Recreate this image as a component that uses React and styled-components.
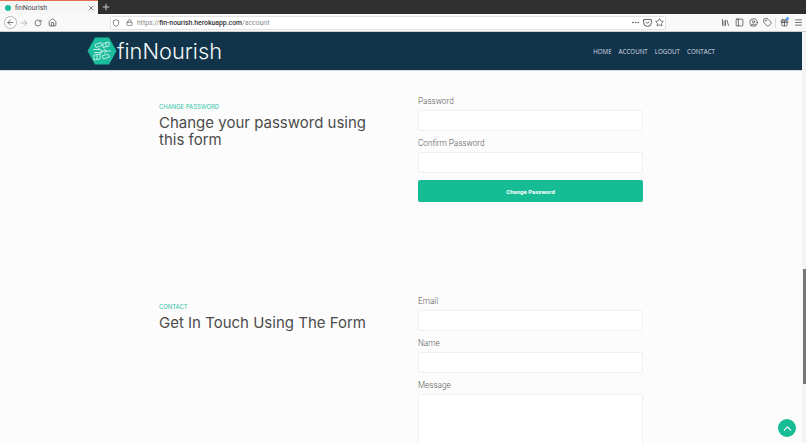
import React from 'react';
import styled, { createGlobalStyle } from 'styled-components';
import {
  ArrowLeft, ArrowRight, RotateCw, Home, Shield, Lock, Star, Library,
  PanelLeft, CircleUser, Tag, Gift, Menu, X, Plus, ChevronUp, Ellipsis,
} from 'lucide-react';

const GlobalStyle = createGlobalStyle`
  html, body {
    margin: 0;
    padding: 0;
    height: 443px;
    overflow: hidden;
    background: #fcfcfc;
  }
  * { box-sizing: border-box; }
`;

const Window = styled.div`
  position: relative;
  width: 806px;
  height: 443px;
  overflow: hidden;
  display: flex;
  flex-direction: column;
  font-family: 'Roboto', sans-serif;
`;

const TabStrip = styled.div`
  height: 14px;
  flex: none;
  background: #302f2f;
  display: flex;
  align-items: center;
`;

const Tab = styled.div`
  width: 98px;
  height: 14px;
  background: #f6f6f7;
  border-top: 1px solid #e2714b;
  display: flex;
  align-items: center;
  padding: 0 3px 0 5px;
  gap: 4px;
  color: #4a4a4f;
  font-size: 7px;
`;

const TabDot = styled.span`
  width: 6px;
  height: 6px;
  border-radius: 50%;
  background: #1abc9c;
  flex: none;
`;

const TabTitle = styled.span`
  flex: 1;
`;

const NewTab = styled.span`
  margin-left: 3px;
  display: flex;
  color: #e4e4e4;
`;

const Toolbar = styled.div`
  height: 18px;
  flex: none;
  background: #f9f9fa;
  border-bottom: 1px solid #ccc;
  display: flex;
  align-items: center;
  color: #4a4a4f;
  padding-left: 4px;
`;

const BackButton = styled.span`
  width: 13px;
  height: 13px;
  border: 1px solid #b4b4b6;
  border-radius: 50%;
  background: #fff;
  display: flex;
  align-items: center;
  justify-content: center;
`;

const ToolIcon = styled.span`
  width: 14px;
  display: flex;
  justify-content: center;
  color: ${p => (p.$muted ? '#b1b1b3' : '#4a4a4f')};
`;

const UrlBar = styled.div`
  width: 556px;
  height: 14px;
  margin-left: 51px;
  background: #fff;
  border: 1px solid #e3e3e5;
  border-radius: 2px;
  display: flex;
  align-items: center;
  font-size: 6.85px;
`;

const UrlLead = styled.span`
  width: 10px;
  margin-right: 3px;
  display: flex;
  justify-content: center;
`;

const UrlText = styled.span`
  flex: 1;
  color: #8a8a8e;
  white-space: nowrap;
`;

const UrlHost = styled.b`
  color: #2f2f33;
  font-weight: 500;
`;

const UrlAction = styled.span`
  width: 12px;
  display: flex;
  justify-content: center;
`;

const RightTools = styled.div`
  display: flex;
  align-items: center;
  margin-left: 52px;
`;

const Divider = styled.span`
  width: 1px;
  height: 10px;
  background: #dcdcdc;
  margin: 0 1px;
`;

const GiftWrap = styled.span`
  position: relative;
  width: 14px;
  display: flex;
  justify-content: center;
`;

const BlueDot = styled.span`
  position: absolute;
  top: -1px;
  right: 2px;
  width: 3px;
  height: 3px;
  border-radius: 50%;
  background: #45a1ff;
`;

const Page = styled.main`
  flex: 1;
  min-height: 0;
  width: 802px;
  background: #fcfcfc;
`;

const Navbar = styled.nav`
  height: 39px;
  background: #12344a;
  border-bottom: 1px solid #cfdde3;
  display: flex;
  align-items: center;
  justify-content: space-between;
  padding: 0 87px;
`;

const Brand = styled.div`
  display: flex;
  align-items: center;
`;

const BrandName = styled.span`
  font-family: 'Inter', sans-serif;
  font-weight: 300;
  font-size: 21.8px;
  color: #f4f8f8;
`;

const NavLinks = styled.div`
  display: flex;
  gap: 7px;
`;

const NavLink = styled.a`
  font-family: 'Open Sans', sans-serif;
  font-size: 6.2px;
  color: #d3dde2;
  text-decoration: none;
`;

const Section = styled.section`
  height: 200px;
  padding: 25px 0 0 159px;
  display: grid;
  grid-template-columns: 259px 225px;
  align-items: start;
`;

const Intro = styled.div`
  padding-top: 7px;
`;

const Eyebrow = styled.div`
  font-family: 'Inter', sans-serif;
  font-weight: 400;
  font-size: 5.9px;
  line-height: 8px;
  color: #2cc4a6;
  text-transform: uppercase;
`;

const Heading = styled.h2`
  margin: 3px 0 0;
  width: 225px;
  font-family: 'Inter', sans-serif;
  font-weight: 400;
  font-size: 15px;
  line-height: 17px;
  color: #4c4c4c;
`;

const Form = styled.form`
  display: flex;
  flex-direction: column;
`;

const Label = styled.label`
  font-weight: 300;
  font-size: 8.2px;
  line-height: 10px;
  color: #555;
  margin-bottom: 4px;
`;

const Input = styled.input`
  height: 21px;
  margin-bottom: 7px;
  background: #fff;
  border: 1px solid #f0f0f0;
  border-radius: 2px;
`;

const TextArea = styled.textarea`
  height: 80px;
  background: #fff;
  border: 1px solid #f0f0f0;
  border-radius: 2px;
  resize: none;
`;

const SubmitButton = styled.button`
  height: 22px;
  border: 0;
  border-radius: 2px;
  background: #16bc94;
  color: #fff;
  font-family: 'Roboto', sans-serif;
  font-weight: 700;
  font-size: 6px;
`;

const ScrollTrack = styled.div`
  position: absolute;
  left: 802px;
  top: 32px;
  bottom: 0;
  width: 4px;
  background: #f4f4f4;
`;

const ScrollThumb = styled.div`
  position: absolute;
  left: 803px;
  top: 269px;
  width: 3px;
  height: 115px;
  background: #77787a;
`;

const TopButton = styled.a`
  position: absolute;
  left: 778px;
  top: 419px;
  width: 18px;
  height: 18px;
  border-radius: 50%;
  background: #16bc94;
  color: #fff;
  display: flex;
  align-items: center;
  justify-content: center;
`;

const LogoMark = () => (
  <svg width="30" height="28" viewBox="0 0 30 28">
    <polygon points="0.5,14 8,0.5 22,0.5 29.5,14 22,27.5 8,27.5" fill="#1abc9c" />
    <g fill="none" stroke="#e6f8f4" strokeWidth="0.8">
      <path d="M8 7.500l6-2 1 3-6 2zM16 6.500l6-1.500v4l-6 1.500zM19 5.500v4.500" />
      <path d="M6 12.500h7l2 1.500h9M7 15.500h6l2-1.500M11 11l2 1.500M17 11.500l2 2.500M17 16.500l3-2.500M13 17l3-2.500" />
      <path d="M7 18l6-1v5l-6 1zM10 17.500v5M15 19l6-2 1.500 3-6 2z" />
    </g>
  </svg>
);

const PocketIcon = () => (
  <svg width="9" height="9" viewBox="0 0 16 16" fill="none" stroke="currentColor" strokeWidth="1.6">
    <path d="M2 2.500h12a1 1 0 0 1 1 1V8a7 7 0 0 1-14 0V3.500a1 1 0 0 1 1-1z" />
    <path d="M5 6.500l3 3 3-3" />
  </svg>
);

const PasswordForm = () => (
  <Form>
    <Label>Password</Label>
    <Input type="password" />
    <Label>Confirm Password</Label>
    <Input type="password" />
    <SubmitButton type="button">Change Password</SubmitButton>
  </Form>
);

const ContactForm = () => (
  <Form>
    <Label>Email</Label>
    <Input type="email" />
    <Label>Name</Label>
    <Input type="text" />
    <Label>Message</Label>
    <TextArea />
  </Form>
);

const App = () => (
  <Window>
    <GlobalStyle />
    <TabStrip>
      <Tab>
        <TabDot />
        <TabTitle>finNourish</TabTitle>
        <X size={8} />
      </Tab>
      <NewTab><Plus size={10} /></NewTab>
    </TabStrip>
    <Toolbar>
      <BackButton><ArrowLeft size={9} /></BackButton>
      <ToolIcon $muted><ArrowRight size={10} /></ToolIcon>
      <ToolIcon><RotateCw size={8} /></ToolIcon>
      <ToolIcon><Home size={9} /></ToolIcon>
      <UrlBar>
        <UrlLead><Shield size={8} /></UrlLead>
        <UrlLead><Lock size={7} /></UrlLead>
        <UrlText>https://<UrlHost>fin-nourish.herokuapp.com</UrlHost>/account</UrlText>
        <UrlAction><Ellipsis size={9} /></UrlAction>
        <UrlAction><PocketIcon /></UrlAction>
        <UrlAction><Star size={9} /></UrlAction>
      </UrlBar>
      <RightTools>
        <ToolIcon><Library size={9} /></ToolIcon>
        <ToolIcon><PanelLeft size={9} /></ToolIcon>
        <ToolIcon><CircleUser size={9} /></ToolIcon>
        <ToolIcon><Tag size={9} /></ToolIcon>
        <Divider />
        <GiftWrap><Gift size={9} /><BlueDot /></GiftWrap>
        <ToolIcon><Menu size={9} /></ToolIcon>
      </RightTools>
    </Toolbar>
    <Page>
      <Navbar>
        <Brand>
          <LogoMark />
          <BrandName>finNourish</BrandName>
        </Brand>
        <NavLinks>
          <NavLink>HOME</NavLink>
          <NavLink>ACCOUNT</NavLink>
          <NavLink>LOGOUT</NavLink>
          <NavLink>CONTACT</NavLink>
        </NavLinks>
      </Navbar>
      <Section>
        <Intro>
          <Eyebrow>Change Password</Eyebrow>
          <Heading>Change your password using this form</Heading>
        </Intro>
        <PasswordForm />
      </Section>
      <Section>
        <Intro>
          <Eyebrow>Contact</Eyebrow>
          <Heading>Get In Touch Using The Form</Heading>
        </Intro>
        <ContactForm />
      </Section>
    </Page>
    <ScrollTrack />
    <ScrollThumb />
    <TopButton><ChevronUp size={13} /></TopButton>
  </Window>
);

export default App;
